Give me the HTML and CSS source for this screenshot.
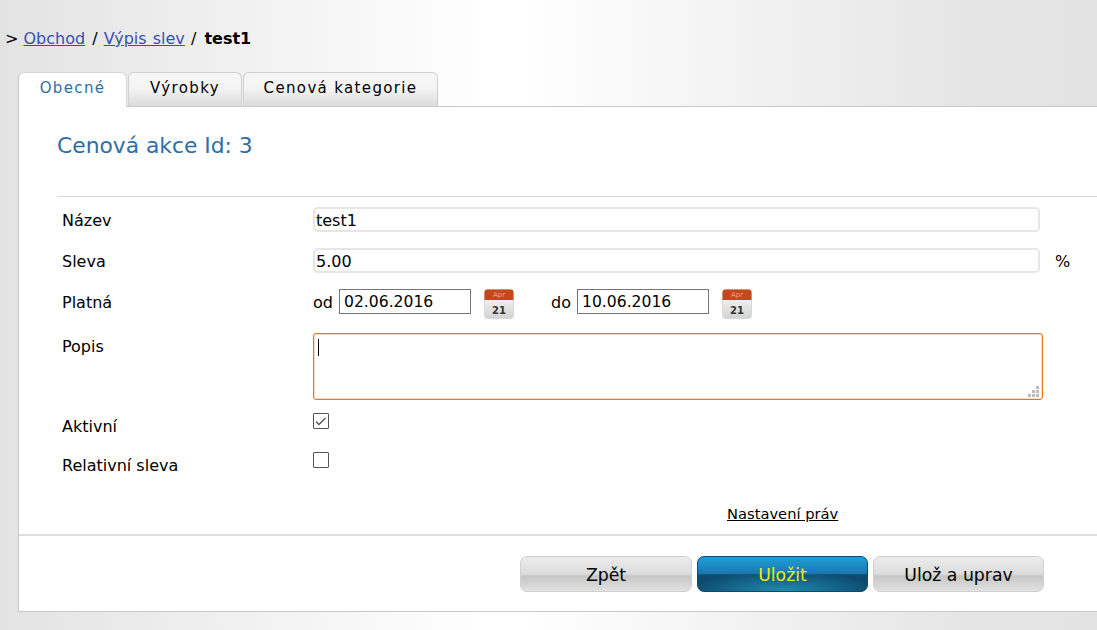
FILE: index.html
```html
<!DOCTYPE html>
<html lang="cs">
<head>
<meta charset="utf-8">
<title>Cenová akce</title>
<link rel="stylesheet" href="styles.css">
</head>
<body>
<nav class="crumbs">&gt; <a href="#">Obchod</a> / <a href="#">Výpis slev</a> / <b>test1</b></nav>
<div class="tabs">
  <a class="tab tab-active tab-a" href="#">Obecné</a>
  <a class="tab tab-b" href="#">Výrobky</a>
  <a class="tab tab-c" href="#">Cenová kategorie</a>
</div>
<main class="panel">
  <h1 class="title">Cenová akce Id: 3</h1>
  <form class="form">
    <div class="row row-text">
      <label class="lab">Název</label>
      <input class="field" type="text" value="test1">
    </div>
    <div class="row row-text">
      <label class="lab">Sleva</label>
      <input class="field" type="text" value="5.00">
      <span class="unit">%</span>
    </div>
    <div class="row row-date">
      <label class="lab">Platná</label>
      <span class="pre">od</span>
      <input class="date" type="text" value="02.06.2016">
      <svg class="cal" viewBox="0 0 30 30" width="30" height="30" aria-hidden="true">
        <defs><linearGradient id="cg" x1="0" y1="0" x2="0" y2="1"><stop offset="0" stop-color="#fff"/><stop offset="1" stop-color="#d2d2d2"/></linearGradient></defs>
        <rect x="0.5" y="0.5" width="29" height="29" rx="3" fill="url(#cg)" stroke="#d8d8d8"/>
        <path d="M0.5 11V3.5a3 3 0 0 1 3-3h23a3 3 0 0 1 3 3V11z" fill="#c4481a"/>
        <text x="15" y="7.8" class="cal-m">Apr</text>
        <text x="15" y="24.5" class="cal-d">21</text>
      </svg>
      <span class="pre pre-do">do</span>
      <input class="date" type="text" value="10.06.2016">
      <svg class="cal" viewBox="0 0 30 30" width="30" height="30" aria-hidden="true">
        <rect x="0.5" y="0.5" width="29" height="29" rx="3" fill="url(#cg)" stroke="#d8d8d8"/>
        <path d="M0.5 11V3.5a3 3 0 0 1 3-3h23a3 3 0 0 1 3 3V11z" fill="#c4481a"/>
        <text x="15" y="7.8" class="cal-m">Apr</text>
        <text x="15" y="24.5" class="cal-d">21</text>
      </svg>
    </div>
    <div class="row row-area">
      <label class="lab">Popis</label>
      <div class="area">
        <span class="caret"></span>
        <svg class="grip" viewBox="0 0 12 12" width="12" height="12" aria-hidden="true">
          <path d="M8 0h3v3H8zM4 4h3v3H4zM8 4h3v3H8zM0 8h3v3H0zM4 8h3v3H4zM8 8h3v3H8z" fill="#bbb"/>
        </svg>
      </div>
    </div>
    <div class="row row-check">
      <label class="lab">Aktivní</label>
      <span class="check">
        <svg viewBox="0 0 14 14" width="14" height="14" aria-hidden="true"><path d="M2 7.5l3 3L11.5 4" fill="none" stroke="#555" stroke-width="1.3"/></svg>
      </span>
    </div>
    <div class="row row-check">
      <label class="lab">Relativní sleva</label>
      <span class="check"></span>
    </div>
    <div class="rights"><a href="#">Nastavení práv</a></div>
  </form>
  <div class="actions">
    <button class="btn" type="button">Zpět</button>
    <button class="btn btn-primary" type="button">Uložit</button>
    <button class="btn btn-last" type="button">Ulož a uprav</button>
  </div>
</main>
</body>
</html>
```
FILE: styles.css
```css
* { box-sizing: border-box; }
html, body { height: 100%; }
body {
  margin: 0;
  overflow: hidden;
  font-family: "DejaVu Sans", Verdana, sans-serif;
  font-size: 16px;
  color: #000;
  background: linear-gradient(90deg, #e3e3e3 0, #e4e4e4 2%, #fff 45%, #fff 47%, #e4e4e4 90%, #e3e3e3 100%);
}
.crumbs {
  height: 72px;
  padding: 29px 0 0 5px;
  font-size: 16px;
  line-height: 20px;
  word-spacing: 1px;
}
.crumbs a { color: #3b4db5; }
.crumbs a:first-child { margin: 0 1px 0 -1px; }
.crumbs b { margin-left: 2px; }
.tabs {
  display: flex;
  height: 35px;
  margin-left: 18px;
  gap: 1px;
  position: relative;
  z-index: 1;
}
.tab {
  display: block;
  height: 34px;
  padding-top: 6px;
  font-size: 15px;
  line-height: 18px;
  letter-spacing: 1.35px;
  text-align: center;
  color: #000;
  text-decoration: none;
  border: 1px solid #cfcfcf;
  border-bottom: 0;
  border-radius: 6px 6px 0 0;
  background: linear-gradient(#f7f7f7, #f4f4f4 45%, #dcdcdc);
}
.tab-a { width: 109px; }
.tab-b { width: 114px; }
.tab-c { width: 195px; }
.tab-active {
  height: 35px;
  color: #2f6ea5;
  background: #fff;
  border-color: #d6d6d6;
  border-left-color: #c8c8c8;
}
.panel {
  margin: -1px -20px 0 18px;
  height: 506px;
  border: 1px solid #c8c8c8;
  background: #fff;
  display: flex;
  flex-direction: column;
}
.title {
  margin: 0 0 0 38px;
  height: 90px;
  padding-top: 26px;
  font-size: 21.8px;
  line-height: 26px;
  font-weight: 400;
  color: #2f6ea5;
  border-bottom: 1px solid #d8d8d8;
}
.form { flex: none; height: 337px; padding-left: 43px; }
.row { display: flex; }
.lab { width: 251px; flex: none; }
.row-text { height: 41px; padding-top: 10px; line-height: 25px; }
.row-text .lab, .row-date .lab { line-height: 27px; }
.field {
  width: 727px;
  height: 25px;
  padding: 2px 1px 0;
  font: inherit;
  border: 2px solid #e6e6e6;
  border-radius: 5px;
  background: #fff;
  color: #000;
}
.unit { margin-left: 15px; line-height: 27px; }
.row-date { height: 54px; padding-top: 10px; line-height: 27px; }
.pre { width: 26px; flex: none; }
.pre-do { margin-left: 37px; }
.date {
  width: 132px;
  height: 25px;
  padding: 2px 0 0 4px;
  font: inherit;
  font-size: 15.6px;
  border: 1px solid #767676;
  color: #000;
  background: #fff;
}
.cal { margin-left: 13px; flex: none; display: block; }
.cal-m { font: 7px "DejaVu Sans", sans-serif; fill: #f0a080; text-anchor: middle; }
.cal-d { font: 700 10px "DejaVu Sans", sans-serif; fill: #333; text-anchor: middle; }
.row-area { height: 80px; line-height: 25px; }
.row-area .lab { line-height: 27px; }
.area {
  position: relative;
  width: 730px;
  height: 67px;
  border: 1px solid #e8761c;
  border-radius: 3px;
  box-shadow: inset 0 0 0 1px #fcdcc0;
  background: #fff;
}
.caret {
  position: absolute;
  left: 4px;
  top: 5px;
  width: 1px;
  height: 17px;
  background: #000;
}
.grip { position: absolute; right: 2px; bottom: 1px; display: block; }
.row-check { height: 39px; line-height: 25px; }
.row-check .lab { padding-top: 1px; }
.check {
  width: 16px;
  height: 16px;
  display: block;
  border: 1px solid #555;
  border-radius: 1px;
  background: #fff;
}
.check svg { display: block; margin: 0; }
.rights {
  margin-top: 14px;
  padding-left: 665px;
  font-size: 14.7px;
  line-height: 18px;
}
.rights a { color: #000; }
.actions {
  display: flex;
  gap: 5px;
  padding: 20px 0 0 501px;
  border-top: 2px solid #dcdcdc;
  flex: 1;
}
.btn {
  width: 172px;
  height: 36px;
  padding: 2px 0 0;
  font: inherit;
  font-size: 17.3px;
  color: #000;
  border: 1px solid #cfcfcf;
  border-radius: 7px;
  background: linear-gradient(#ececec, #dcdcdc 50%, #c6c6c6 56%, #d8d8d8 85%, #e2e2e2);
}
.btn-last { width: 171px; }
.btn-primary {
  width: 171px;
  color: #f0e81a;
  border-color: #0e4a70;
  background:
    radial-gradient(ellipse 55% 60% at 50% 100%, #1f8cad 0, rgba(31,140,173,0) 100%),
    linear-gradient(#1f9fd8 0, #1b78b0 48%, #0c4a70 53%, #0c4a70 100%);
}
```
